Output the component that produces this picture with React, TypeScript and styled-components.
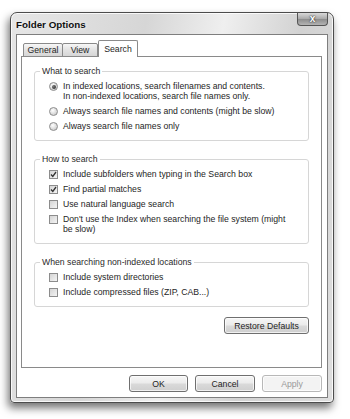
import styled, { createGlobalStyle } from "styled-components";

const GlobalStyle = createGlobalStyle`
  html, body {
    margin: 0;
    padding: 0;
    background: #ffffff;
  }
  body {
    font-family: "Liberation Sans", Arial, sans-serif;
    font-size: 8.7px;
    color: #1e1e1e;
  }
`;

const Page = styled.div`
  width: 350px;
  height: 419px;
  padding: 12px 16px 0 10px;
  box-sizing: border-box;
  overflow: hidden;
`;

const Window = styled.div`
  width: 324px;
  height: 391px;
  box-sizing: border-box;
  display: flex;
  flex-direction: column;
  padding: 0 5px 4px 5px;
  border: 1px solid #4c4c4c;
  border-radius: 7px 7px 4px 4px;
  background: linear-gradient(
    100deg,
    #e6e6e6 0%,
    #d6d6d6 35%,
    #efefef 55%,
    #d2d2d2 75%,
    #dedede 100%
  );
  box-shadow: -2px 5px 9px rgba(0, 0, 0, 0.55),
    inset 0 0 0 1px rgba(255, 255, 255, 0.8);
`;

const TitleBar = styled.div`
  height: 21px;
  display: flex;
  align-items: flex-start;
  justify-content: space-between;
`;

const Title = styled.span`
  margin-top: 6px;
  padding-left: 0;
  font-size: 9.8px;
  font-weight: bold;
  color: #111;
  text-shadow: 0 0 4px rgba(255, 255, 255, 0.9);
`;

const CloseButton = styled.div`
  width: 31px;
  height: 13px;
  box-sizing: border-box;
  border: 1px solid #555;
  border-top: none;
  border-radius: 0 0 4px 4px;
  background: linear-gradient(#d9d9d9, #a8a8a8 50%, #8c8c8c 51%, #b4b4b4);
  display: flex;
  align-items: center;
  justify-content: center;
  font-size: 10px;
  font-weight: bold;
  color: #fff;
  line-height: 1;
  text-shadow: 0 0 2px #333, 0 0 1px #333;
`;

const Client = styled.div`
  flex: 1;
  display: flex;
  flex-direction: column;
  background: #fff;
  border: 1px solid #7e7e7e;
  padding: 5px 5px 5px 4px;
  min-height: 0;
`;

const TabStrip = styled.div`
  display: flex;
  align-items: flex-end;
  height: 17px;
  padding-left: 2px;
  position: relative;
  z-index: 1;
  margin-bottom: -1px;
`;

const Tab = styled.div<{ $active?: boolean; $w: number }>`
  width: ${(p) => p.$w}px;
  height: ${(p) => (p.$active ? 17 : 14)}px;
  box-sizing: border-box;
  border: 1px solid #8a8a8a;
  border-bottom: ${(p) => (p.$active ? "none" : "1px solid #8a8a8a")};
  margin-left: ${(p) => (p.$active ? "0" : "-1px")};
  border-radius: 2px 2px 0 0;
  background: ${(p) =>
    p.$active ? "#fff" : "linear-gradient(#f7f7f7, #e3e3e3 50%, #d6d6d6)"};
  display: flex;
  align-items: ${(p) => (p.$active ? "flex-start" : "center")};
  padding-top: ${(p) => (p.$active ? "3px" : "0")};
  justify-content: center;
  font-size: 8.7px;
  color: #1e1e1e;
  &:first-child {
    margin-left: 0;
  }
`;

const Panel = styled.div`
  flex: 1;
  border: 1px solid #8a8a8a;
  padding: 9px 12px 0 12px;
  display: flex;
  flex-direction: column;
`;

const Group = styled.fieldset`
  margin: 0 0 13px 0;
  padding: 5px 8px 9px 14px;
  border: 1px solid #d6d6d6;
  border-radius: 3px;
  display: flex;
  flex-direction: column;
  gap: 5px;
`;

const Legend = styled.legend`
  margin-left: -9px;
  padding: 0 2px;
  font-size: 8.7px;
  line-height: 10px;
  color: #2a2a2a;
`;

const Option = styled.label`
  display: flex;
  align-items: flex-start;
  gap: 5px;
  line-height: 10px;
  font-size: 8.7px;
  color: #1e1e1e;
`;

const Radio = styled.span<{ $checked?: boolean }>`
  flex: none;
  width: 9px;
  height: 9px;
  margin-top: 1px;
  box-sizing: border-box;
  border-radius: 50%;
  border: 1px solid #8c8c8c;
  background: radial-gradient(circle at 40% 35%, #ffffff, #d2d2d2 70%);
  display: flex;
  align-items: center;
  justify-content: center;
  &::after {
    content: "";
    display: ${(p) => (p.$checked ? "block" : "none")};
    width: 4px;
    height: 4px;
    border-radius: 50%;
    background: radial-gradient(circle at 35% 35%, #777, #222);
  }
`;

const Check = styled.span`
  flex: none;
  width: 9px;
  height: 9px;
  margin-top: 1px;
  box-sizing: border-box;
  border: 1px solid #8c8c8c;
  background: linear-gradient(135deg, #d4d4d4, #f4f4f4);
  display: flex;
  align-items: center;
  justify-content: center;
`;

const Text = styled.span`
  max-width: 234px;
`;

const Line = styled.span`
  display: block;
`;

const ButtonRow = styled.div<{ $top: number }>`
  display: flex;
  justify-content: flex-end;
  gap: 7px;
  margin-top: ${(p) => p.$top}px;
`;

const Button = styled.div<{ $w: number; $disabled?: boolean }>`
  width: ${(p) => p.$w}px;
  height: 17px;
  box-sizing: border-box;
  border: 1px solid ${(p) => (p.$disabled ? "#b8b8b8" : "#6f6f6f")};
  border-radius: 3px;
  background: ${(p) =>
    p.$disabled
      ? "#f3f3f3"
      : "linear-gradient(#f6f6f6, #ebebeb 48%, #dadada 52%, #cfcfcf)"};
  box-shadow: inset 0 0 0 1px rgba(255, 255, 255, 0.7);
  display: flex;
  align-items: center;
  justify-content: center;
  font-size: 8.7px;
  color: ${(p) => (p.$disabled ? "#9a9a9a" : "#1e1e1e")};
`;

function CheckBox({ checked }: { checked?: boolean }) {
  return (
    <Check>
      {checked && (
        <svg width="7" height="7" viewBox="0 0 7 7">
          <path
            d="M1 3.5 L2.8 5.5 L6 1"
            fill="none"
            stroke="#333"
            strokeWidth="1.3"
          />
        </svg>
      )}
    </Check>
  );
}

const whatToSearch = [
  {
    lines: [
      "In indexed locations, search filenames and contents.",
      "In non-indexed locations, search file names only.",
    ],
    checked: true,
  },
  { lines: ["Always search file names and contents (might be slow)"] },
  { lines: ["Always search file names only"] },
];

const howToSearch = [
  { text: "Include subfolders when typing in the Search box", checked: true },
  { text: "Find partial matches", checked: true },
  { text: "Use natural language search" },
  {
    text: "Don't use the Index when searching the file system (might be slow)",
  },
];

const nonIndexed = [
  { text: "Include system directories" },
  { text: "Include compressed files (ZIP, CAB...)" },
];

export default function App() {
  return (
    <>
      <GlobalStyle />
      <Page>
        <Window>
          <TitleBar>
            <Title>Folder Options</Title>
            <CloseButton>x</CloseButton>
          </TitleBar>
          <Client>
            <TabStrip>
              <Tab $w={40}>General</Tab>
              <Tab $w={36}>View</Tab>
              <Tab $w={40} $active>
                Search
              </Tab>
            </TabStrip>
            <Panel>
              <Group>
                <Legend>What to search</Legend>
                {whatToSearch.map((item) => (
                  <Option key={item.lines[0]}>
                    <Radio $checked={item.checked} />
                    <span>
                      {item.lines.map((l) => (
                        <Line key={l}>{l}</Line>
                      ))}
                    </span>
                  </Option>
                ))}
              </Group>
              <Group>
                <Legend>How to search</Legend>
                {howToSearch.map((item) => (
                  <Option key={item.text}>
                    <CheckBox checked={item.checked} />
                    <Text>{item.text}</Text>
                  </Option>
                ))}
              </Group>
              <Group>
                <Legend>When searching non-indexed locations</Legend>
                {nonIndexed.map((item) => (
                  <Option key={item.text}>
                    <CheckBox />
                    <Text>{item.text}</Text>
                  </Option>
                ))}
              </Group>
              <ButtonRow $top={-3}>
                <Button $w={85}>Restore Defaults</Button>
              </ButtonRow>
            </Panel>
            <ButtonRow $top={7}>
              <Button $w={59}>OK</Button>
              <Button $w={60}>Cancel</Button>
              <Button $w={60} $disabled>
                Apply
              </Button>
            </ButtonRow>
          </Client>
        </Window>
      </Page>
    </>
  );
}
